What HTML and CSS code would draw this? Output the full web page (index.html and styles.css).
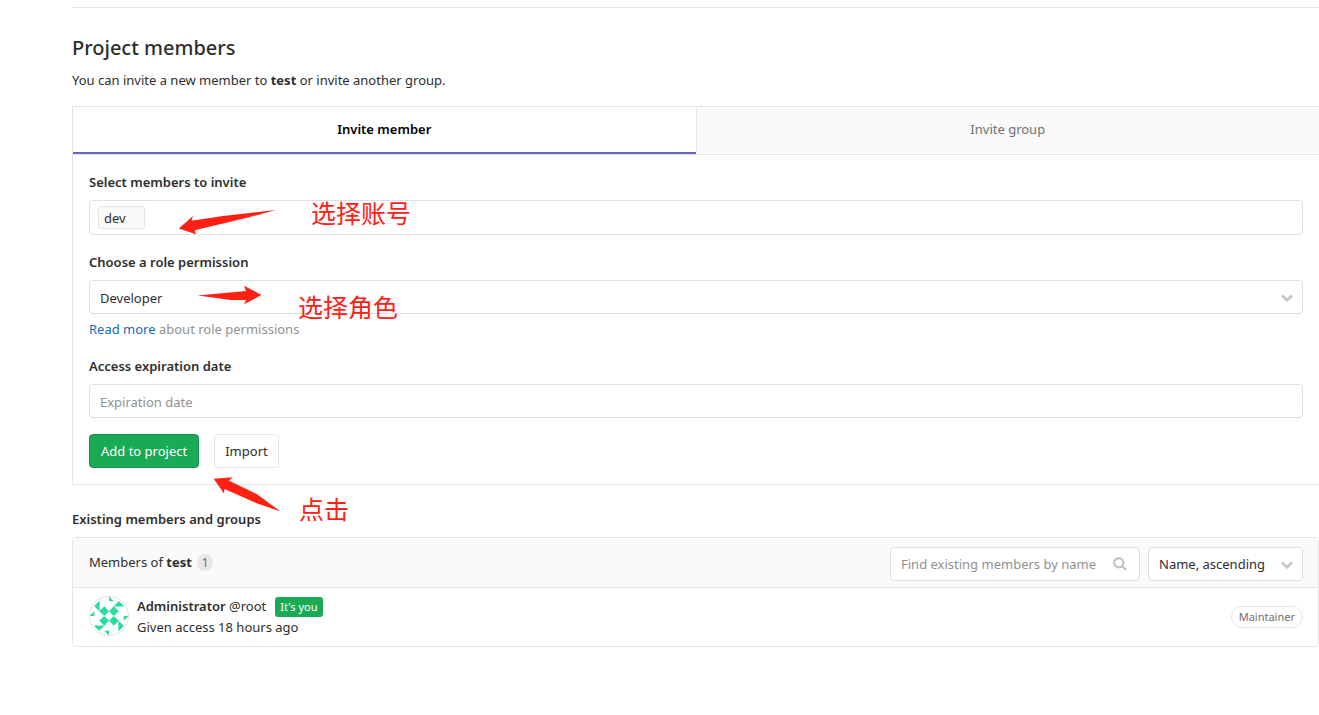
FILE: index.html
```html
<!DOCTYPE html>
<html lang="en">
<head>
<meta charset="utf-8">
<meta name="viewport" content="width=device-width, initial-scale=1">
<title>Project members</title>
<link rel="stylesheet" href="styles.css">
</head>
<body>
<main class="page">
  <header class="intro">
    <h1 class="title">Project members</h1>
    <p class="lead">You can invite a new member to <strong>test</strong> or invite another group.</p>
  </header>

  <section class="invite">
    <div class="tabs" role="tablist">
      <button class="tab tab-active" type="button" role="tab" aria-selected="true">Invite member</button>
      <button class="tab" type="button" role="tab" aria-selected="false">Invite group</button>
    </div>
    <form class="form">
      <div class="field">
        <label class="label" for="members">Select members to invite</label>
        <div class="control tokens">
          <span class="token">dev</span>
          <input class="token-input" id="members" type="text">
        </div>
      </div>
      <div class="field">
        <label class="label" for="role">Choose a role permission</label>
        <div class="select-wrap">
          <select class="control" id="role"><option>Developer</option></select>
          <svg class="chevron" viewBox="0 0 12 8" aria-hidden="true"><path d="M1 1.5 6 6.2 11 1.5"/></svg>
        </div>
        <p class="help"><a class="link" href="#">Read more</a> about role permissions</p>
      </div>
      <div class="field">
        <label class="label" for="expires">Access expiration date</label>
        <input class="control" id="expires" type="text" placeholder="Expiration date">
      </div>
      <div class="actions">
        <button class="button button-primary" type="submit">Add to project</button>
        <button class="button" type="button">Import</button>
      </div>
    </form>
  </section>

  <h2 class="subtitle">Existing members and groups</h2>

  <section class="panel">
    <div class="panel-head">
      <div class="panel-title">Members of <strong>test</strong> <span class="count">1</span></div>
      <div class="filters">
        <div class="search">
          <input class="control search-input" type="text" placeholder="Find existing members by name" aria-label="Find existing members by name">
          <svg class="search-icon" viewBox="0 0 14 14" aria-hidden="true"><circle cx="5.8" cy="5.8" r="4.6"/><path d="m9.3 9.3 3.6 3.6"/></svg>
        </div>
        <div class="select-wrap sort">
          <select class="control sort-select" aria-label="Sort members"><option>Name, ascending</option></select>
          <svg class="chevron" viewBox="0 0 12 8" aria-hidden="true"><path d="M1 1.5 6 6.2 11 1.5"/></svg>
        </div>
      </div>
    </div>
    <div class="member">
      <svg class="avatar" viewBox="0 0 40 40" role="img" aria-label="Administrator">
        <defs>
          <clipPath id="round"><circle cx="20" cy="20" r="19.5"/></clipPath>
          <g id="quarter">
            <path d="M15.3 10.2 20 15.3 15.3 20 10.2 15.3Z"/>
            <path d="M20 .5 24.8 5.3H20Z"/>
            <path d="M5 10.3H10.6V4.6ZM5.3 10.3H10.6V15.6Z"/>
          </g>
        </defs>
        <circle cx="20" cy="20" r="20" fill="#fff"/>
        <g clip-path="url(#round)" fill="#29dc9b">
          <use href="#quarter"/>
          <use href="#quarter" transform="rotate(90 20 20)"/>
          <use href="#quarter" transform="rotate(180 20 20)"/>
          <use href="#quarter" transform="rotate(270 20 20)"/>
        </g>
        <circle cx="20" cy="20" r="19.5" fill="none" stroke="#e1e1e1"/>
      </svg>
      <div class="member-info">
        <div class="member-line"><span><a class="member-name" href="#">Administrator</a> @root</span><span class="badge">It's you</span></div>
        <div>Given access 18 hours ago</div>
      </div>
      <span class="role">Maintainer</span>
    </div>
  </section>

  <div class="notes">
    <svg class="arrow arrow-account" viewBox="0 0 98 25" aria-hidden="true"><path d="M.8 18.500 15 6 13.500 10.700 45 6 97.800 0 70 7.500 16.700 20.300 18 24.200Z"/></svg>
    <span class="note note-account">选择账号</span>
    <svg class="arrow arrow-role" viewBox="0 0 66 20" aria-hidden="true"><path d="M.7 10.500 49 6 47 .7 64.500 10 47 19.300 49 15 34 15Z"/></svg>
    <span class="note note-role">选择角色</span>
    <svg class="arrow arrow-click" viewBox="0 0 68 36" aria-hidden="true"><path d="M.7 1.700 20 .3 15.700 3.500 43.700 17 67.500 34.500 43.700 26.300 11.500 12 11 16.500Z"/></svg>
    <span class="note note-click">点击</span>
  </div>
</main>
</body>
</html>
```
FILE: styles.css
```css
* { box-sizing: border-box; }

body {
  margin: 0;
  background: #fff;
  color: #2e2e2e;
  font: 13px/20px "Noto Sans", "Noto Sans CJK SC", sans-serif;
}

button, input, select { font: inherit; color: inherit; }
p, h1, h2 { margin: 0; }

.page { position: relative; padding: 7px 0 0 72px; overflow: hidden; }

.intro { border-top: 1px solid #e5e5e5; padding: 26px 0 16px; }
.title { font-size: 20px; line-height: 28px; font-weight: 500; margin-bottom: 8px; }

.invite { border: 1px solid #e5e5e5; border-right: 0; }
.tabs { display: flex; border-bottom: 1px solid #e5e5e5; }
.tab {
  flex: 1;
  height: 47px;
  padding: 0 0 2px;
  border: 0;
  border-bottom: 2px solid transparent;
  background: #fafafa;
  color: #707070;
}
.tab + .tab { border-left: 1px solid #e5e5e5; }
.tab-active { background: #fff; border-bottom-color: #6666c4; color: #000; font-weight: 600; }

.form { padding: 17px 16px 16px; }
.field + .field { margin-top: 17px; }
.label { display: block; margin-bottom: 8px; font-weight: 600; }
.control {
  display: block;
  width: 100%;
  height: 34px;
  padding: 2px 10px 0;
  border: 1px solid #dfdfdf;
  border-radius: 4px;
  background: #fff;
  outline: 0;
  appearance: none;
}
.control::placeholder { color: #919191; opacity: 1; }
.tokens { display: flex; align-items: center; gap: 4px; height: 35px; padding: 0 8px; }
.token {
  width: 47px;
  padding: 1px 5px 0;
  border: 1px solid #e5e5e5;
  border-radius: 3px;
  background: #fafafa;
  line-height: 20px;
}
.token-input { flex: 1; border: 0; padding: 0; outline: 0; background: none; }
.select-wrap { position: relative; }
.chevron {
  position: absolute;
  right: 10px;
  top: 14px;
  width: 12px;
  height: 8px;
  fill: none;
  stroke: #c4c4c4;
  stroke-width: 2.6;
  pointer-events: none;
}
.help { margin-top: 5px; color: #919191; }
.link { color: #1b69b6; text-decoration: none; }

.actions { display: flex; gap: 15px; margin-top: 16px; }
.button {
  height: 34px;
  padding: 0 10px;
  border: 1px solid #e5e5e5;
  border-radius: 4px;
  background: #fff;
}
.button-primary { padding: 0 11px; border-color: #168f48; background: #1aaa55; color: #fff; }

.subtitle { margin: 24px 0 8px; font-size: 13px; line-height: 20px; font-weight: 600; }

.panel { border: 1px solid #e5e5e5; border-radius: 4px; }
.panel-head {
  display: flex;
  align-items: flex-start;
  justify-content: space-between;
  padding: 9px 15px 6px 16px;
  border-bottom: 1px solid #e5e5e5;
  background: #fafafa;
}
.panel-title { padding-top: 5px; }
.count {
  display: inline-block;
  min-width: 16px;
  margin-left: 2px;
  border-radius: 8px;
  background: #e8e8e8;
  color: #707070;
  font-size: 12px;
  line-height: 17px;
  text-align: center;
}
.filters { display: flex; gap: 8px; }
.search { position: relative; width: 250px; }
.search-input { padding-top: 0; padding-right: 36px; }
.search-icon {
  position: absolute;
  right: 13px;
  top: 10px;
  width: 14px;
  height: 14px;
  fill: none;
  stroke: #c4c4c4;
  stroke-width: 2.2;
}
.sort { width: 155px; }
.sort-select { padding-top: 0; }

.member { display: flex; align-items: center; gap: 8px; padding: 8px 15px 8px 16px; }
.avatar { width: 40px; height: 40px; align-self: flex-start; }
.member-info { flex: 1; line-height: 21px; }
.member-line { display: flex; align-items: center; gap: 9px; }
.member-name { color: inherit; font-weight: 600; text-decoration: none; }
.badge {
  padding: 0 5px;
  border-radius: 3px;
  background: #1aaa55;
  color: #fff;
  font-size: 11px;
  line-height: 20px;
}
.role {
  padding: 0 7px;
  border: 1px solid #e5e5e5;
  border-radius: 11px;
  color: #707070;
  font-size: 11px;
  line-height: 20px;
}

/* Red annotations drawn over the form */
.notes { color: #ff2013; pointer-events: none; }
.arrow, .note { position: absolute; }
.arrow { fill: #ff2013; }
.note { font: 25px/36px "Noto Sans CJK SC", sans-serif; white-space: nowrap; }
.arrow-account { left: 178px; top: 210px; width: 98px; height: 25px; }
.arrow-role { left: 197px; top: 285px; width: 66px; height: 20px; }
.arrow-click { left: 213px; top: 477px; width: 68px; height: 36px; }
.note-account { left: 311px; top: 194px; }
.note-role { left: 298px; top: 288px; }
.note-click { left: 299px; top: 490px; }
```
